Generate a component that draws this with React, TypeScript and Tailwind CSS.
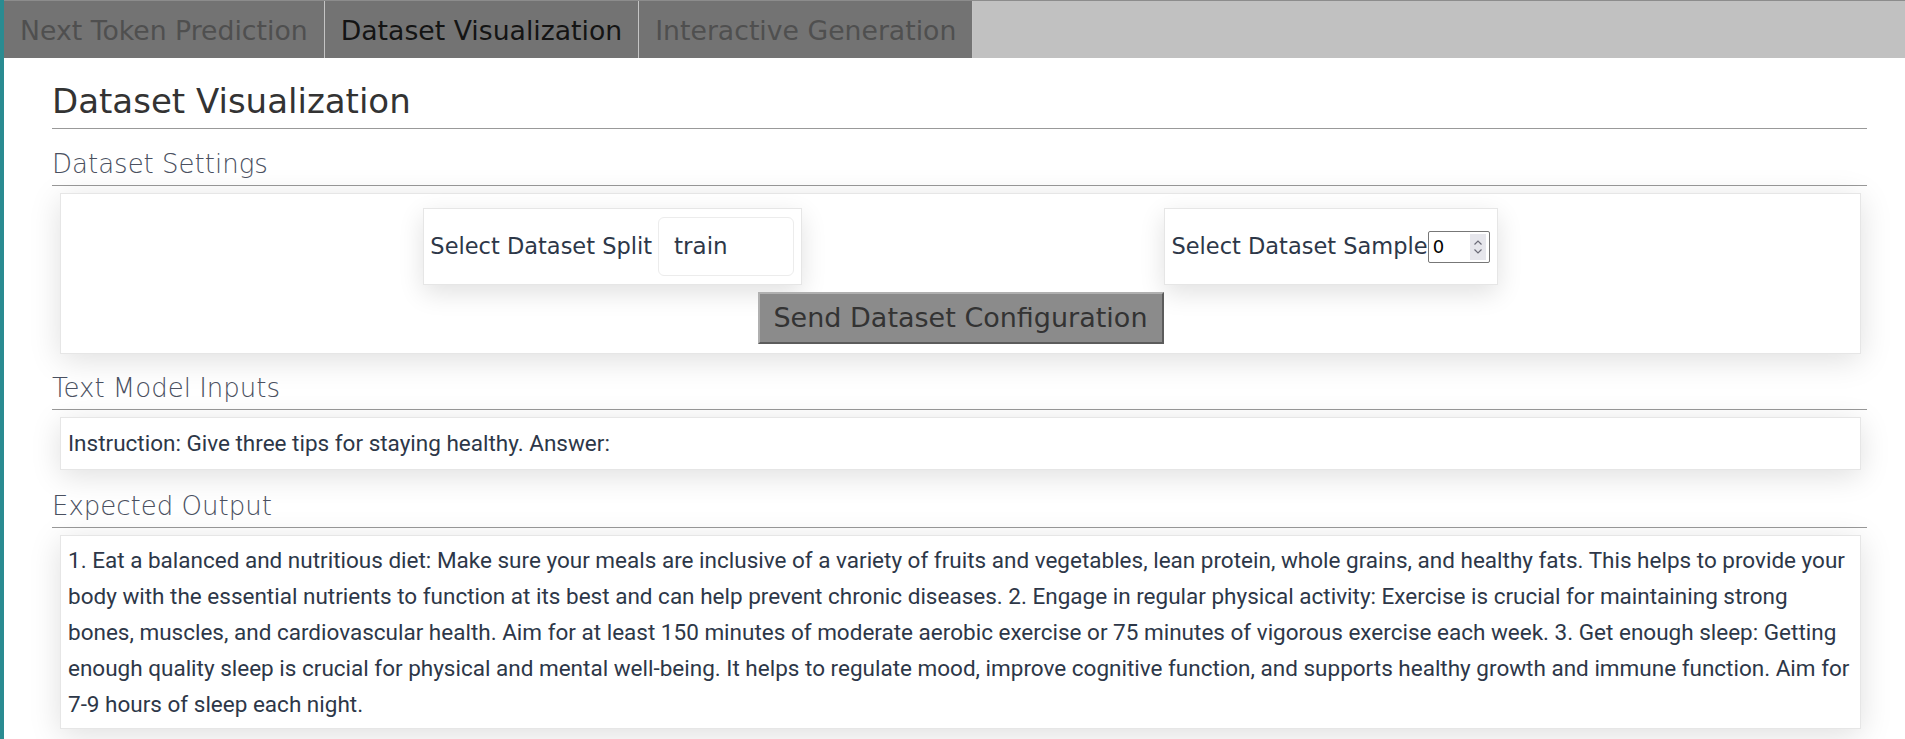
import React, { useState } from 'react';

const tabs = ['Next Token Prediction', 'Dataset Visualization', 'Interactive Generation'];

const expected =
  '1. Eat a balanced and nutritious diet: Make sure your meals are inclusive of a variety of fruits and vegetables, lean protein, whole grains, and healthy fats. This helps to provide your body with the essential nutrients to function at its best and can help prevent chronic diseases. 2. Engage in regular physical activity: Exercise is crucial for maintaining strong bones, muscles, and cardiovascular health. Aim for at least 150 minutes of moderate aerobic exercise or 75 minutes of vigorous exercise each week. 3. Get enough sleep: Getting enough quality sleep is crucial for physical and mental well-being. It helps to regulate mood, improve cognitive function, and supports healthy growth and immune function. Aim for 7-9 hours of sleep each night.';

const SectionTitle: React.FC<{ children: React.ReactNode }> = ({ children }) => (
  <h3 className="font-['DejaVu_Sans',sans-serif] font-light text-[26px] leading-[30px] text-[#4a5060] pb-[6px] border-b border-[#999]">
    {children}
  </h3>
);

const Box: React.FC<{ className?: string; children: React.ReactNode }> = ({ className, children }) => (
  <div
    className={
      'ml-2 mr-[6px] mt-[7px] bg-white border border-[#e6e6e6] shadow-[0_6px_30px_rgba(0,0,0,0.13)] ' + (className ?? '')
    }
  >
    {children}
  </div>
);

export default function App() {
  const [active, setActive] = useState(1);
  const [sample, setSample] = useState(0);

  return (
    <div className="flex min-h-[739px] bg-white">
      <div className="w-[4px] shrink-0 bg-[#2a8b91]" />
      <div className="flex-1 flex flex-col">
        {/* tab bar */}
        <div className="flex h-[58px] bg-[#c1c1c1] border-t border-[#8c8c8c] font-['DejaVu_Sans',sans-serif]">
          {tabs.map((t, i) => (
            <button
              key={t}
              onClick={() => setActive(i)}
              className={
                'h-full px-4 pt-[3px] bg-[#737373] text-[26.7px] border-r border-[#c4c4c4] ' +
                (i === active ? 'text-[#141414]' : 'text-[#4f4f4f]')
              }
            >
              {t}
            </button>
          ))}
        </div>

        <div className="pl-[48px] pr-[38px]">
          <h2 className="mt-[23px] font-['DejaVu_Sans',sans-serif] text-[34px] leading-[40px] text-[#333] pb-[7px] border-b border-[#999]">
            Dataset Visualization
          </h2>

          {/* settings */}
          <div className="mt-[20px]">
            <SectionTitle>Dataset Settings</SectionTitle>
            <Box className="pt-[14px] pb-[9px]">
              <div className="flex justify-evenly font-['DejaVu_Sans',sans-serif] text-[#2d3748]">
                <div className="flex items-center h-[77px] pl-[6px] pr-[7px] border border-[#e6e6e6] shadow-[0_8px_24px_rgba(0,0,0,0.12)] bg-white">
                  <span className="text-[22.5px]">Select Dataset Split</span>
                  <div className="ml-[6px] w-[136px] h-[59px] flex items-center px-[15px] text-[23px] border border-[#ececec] rounded-[6px]">
                    train
                  </div>
                </div>
                <div className="flex items-center h-[77px] pl-[6px] pr-[7px] border border-[#e6e6e6] shadow-[0_8px_24px_rgba(0,0,0,0.12)] bg-white">
                  <span className="text-[22.5px]">Select Dataset Sample</span>
                  <div className="flex items-center w-[62px] h-[32px] border border-[#777] rounded-[2px] pl-[4px] pr-[3px]">
                    <span className="flex-1 text-[18px] text-black">{sample}</span>
                    <div className="w-[16px] h-[26px] bg-[#e6e6ec] flex flex-col items-center justify-center">
                      <svg width="10" height="20" viewBox="0 0 10 20" fill="none" stroke="#6b6b78" strokeWidth="1.2">
                        <path d="M1.5 7.5 L5 4 L8.5 7.5" />
                        <path d="M1.5 12.5 L5 16 L8.5 12.5" />
                      </svg>
                    </div>
                  </div>
                </div>
              </div>
              <div className="flex justify-center mt-[7px]">
                <button
                  onClick={() => setSample((s) => s)}
                  className="w-[406px] h-[52px] bg-[#8b8b8b] border-2 border-t-[#b0b0b0] border-l-[#b0b0b0] border-b-[#5c5c5c] border-r-[#5c5c5c] text-[27px] text-[#333] font-['DejaVu_Sans',sans-serif]"
                >
                  Send Dataset Configuration
                </button>
              </div>
            </Box>
          </div>

          {/* inputs */}
          <div className="mt-[19px]">
            <SectionTitle>Text Model Inputs</SectionTitle>
            <Box className="h-[53px] flex items-center px-[7px]">
              <span className="font-['Roboto',sans-serif] text-[22.5px] text-[#2d3748]">
                Instruction: Give three tips for staying healthy. Answer:
              </span>
            </Box>
          </div>

          {/* expected */}
          <div className="mt-[21px]">
            <SectionTitle>Expected Output</SectionTitle>
            <Box className="px-[7px] py-[6px]">
              <p className="font-['Roboto',sans-serif] text-[22.5px] leading-[36px] text-[#2d3748]">{expected}</p>
            </Box>
          </div>
        </div>
      </div>
    </div>
  );
}
